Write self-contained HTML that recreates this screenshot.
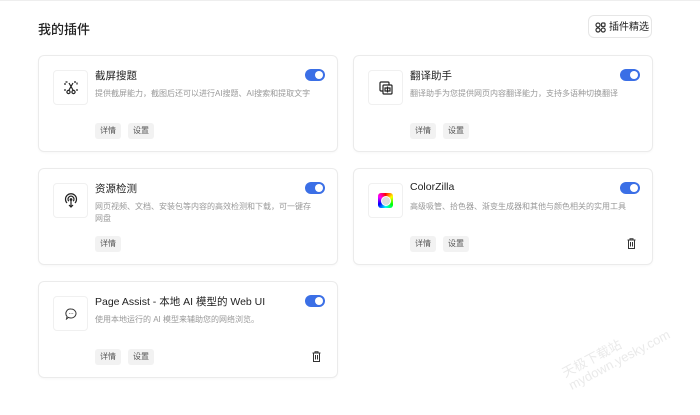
<!DOCTYPE html>
<html><head><meta charset="utf-8"><style>
body{margin:0;width:700px;height:415px;background:#fff;font-family:"Liberation Sans","Noto Sans CJK SC",sans-serif;position:relative;overflow:hidden;color:#222}
.top{position:absolute;left:0;top:0;width:700px;height:1px;background:#eee}
h1{position:absolute;left:38px;top:19px;margin:0;font-size:13px;font-weight:500}
.sel{position:absolute;left:588px;top:15px;width:64px;height:23px;border:1px solid #e6e6e6;border-radius:6px;font-size:10px;line-height:23px;box-sizing:border-box;padding-left:20px}
.card{position:absolute;width:300px;height:97px;border:1px solid #ebebeb;border-radius:6px;box-sizing:border-box;box-shadow:0 1px 2px rgba(0,0,0,0.03)}
.ic{position:absolute;left:14px;top:14px;width:35px;height:35px;border:1px solid #f0f0f0;border-radius:4px;box-sizing:border-box;display:flex;align-items:center;justify-content:center}
.t{position:absolute;left:56px;top:12px;font-size:10.5px}
.d{position:absolute;left:56px;top:32px;width:222px;font-size:8px;color:#999;line-height:12px}
.tg{position:absolute;left:266px;top:13px;width:20px;height:12px;border-radius:6px;background:#3b6fe6}
.tg:after{content:"";position:absolute;right:2px;top:2px;width:8px;height:8px;border-radius:50%;background:#fff}
.b{position:absolute;top:67px;height:16px;line-height:16px;padding:0 5px;background:#f2f2f2;border-radius:3px;font-size:8px;color:#555}
.tr{position:absolute;left:273px;top:69px}
</style></head><body>
<div class="top"></div>
<h1>我的插件</h1>
<div class="sel"><svg style="position:absolute;left:6px;top:6px" width="11" height="11" viewBox="0 0 11 11" fill="none" stroke="#333" stroke-width="1.2"><circle cx="3" cy="3" r="2"/><rect x="6.5" y="1" width="3.5" height="3.5" rx="1"/><circle cx="3" cy="8" r="2"/><circle cx="8.2" cy="8" r="2"/></svg>插件精选</div>

<div class="card" style="left:38px;top:55px">
<div class="ic"><svg width="14" height="14" viewBox="0 0 14 14" fill="none" stroke="#222" stroke-width="1.2"><path d="M1 4V1h3M10 1h3v3M1 8v2M13 8v2" stroke-dasharray="2 1.5"/><path d="M5 2l4 7M9 2L5 9"/><circle cx="4.5" cy="11" r="1.6"/><circle cx="9.5" cy="11" r="1.6"/></svg></div>
<div class="t">截屏搜题</div><div class="tg"></div>
<div class="d">提供截屏能力，截图后还可以进行AI搜题、AI搜索和提取文字</div>
<div class="b" style="left:56px">详情</div><div class="b" style="left:89px">设置</div></div>

<div class="card" style="left:353px;top:55px">
<div class="ic"><svg width="14" height="14" viewBox="0 0 14 14" fill="none" stroke="#222" stroke-width="1.2"><rect x="1" y="1" width="9" height="9" rx="1"/><rect x="4" y="4" width="9" height="9" rx="1" fill="#fff"/><path d="M6 7h5v3H6zM8.5 5.5v6"/></svg></div>
<div class="t">翻译助手</div><div class="tg"></div>
<div class="d" style="width:230px">翻译助手为您提供网页内容翻译能力，支持多语种切换翻译</div>
<div class="b" style="left:56px">详情</div><div class="b" style="left:89px">设置</div></div>

<div class="card" style="left:38px;top:168px">
<div class="ic"><svg width="14" height="15" viewBox="0 0 14 15" fill="none" stroke="#222" stroke-width="1.2"><path d="M3 10a5.5 5.5 0 1 1 8 0"/><path d="M4.8 8.2a3 3 0 1 1 4.4 0"/><circle cx="7" cy="6.5" r="0.8" fill="#222"/><path d="M7 7v7M5 12l2 2 2-2"/></svg></div>
<div class="t">资源检测</div><div class="tg"></div>
<div class="d">网页视频、文档、安装包等内容的高效检测和下载，可一键存网盘</div>
<div class="b" style="left:56px">详情</div></div>

<div class="card" style="left:353px;top:168px">
<div class="ic"><div style="width:15px;height:15px;border-radius:3px;background:conic-gradient(red,yellow,lime,cyan,blue,magenta,red);display:flex;align-items:center;justify-content:center"><div style="width:8px;height:8px;border-radius:50%;background:#ddd;border:1.5px solid #fff"></div></div></div>
<div class="t">ColorZilla</div><div class="tg"></div>
<div class="d" style="width:230px">高级吸管、拾色器、渐变生成器和其他与颜色相关的实用工具</div>
<div class="b" style="left:56px">详情</div><div class="b" style="left:89px">设置</div>
<svg class="tr" width="9" height="11" viewBox="0 0 9 11" fill="none" stroke="#333" stroke-width="1"><path d="M0.5 2h8M3 2V0.8h3V2M1.5 2v8.5h6V2M3.5 4v4.5M5.5 4v4.5"/></svg></div>

<div class="card" style="left:38px;top:281px">
<div class="ic"><svg width="12" height="12" viewBox="0 0 12 12" fill="none" stroke="#333" stroke-width="1"><path d="M6 1a5 4.5 0 1 1-2.5 8.4L1.5 11l0.6-2.5A4.5 4.5 0 0 1 6 1z"/><path d="M4 5.5h0.5M5.8 5.5h0.5M7.6 5.5h0.5"/></svg></div>
<div class="t">Page Assist - 本地 AI 模型的 Web UI</div><div class="tg"></div>
<div class="d">使用本地运行的 AI 模型来辅助您的网络浏览。</div>
<div class="b" style="left:56px">详情</div><div class="b" style="left:89px">设置</div>
<svg class="tr" width="9" height="11" viewBox="0 0 9 11" fill="none" stroke="#333" stroke-width="1"><path d="M0.5 2h8M3 2V0.8h3V2M1.5 2v8.5h6V2M3.5 4v4.5M5.5 4v4.5"/></svg></div>

<div style="position:absolute;left:560px;top:340px;transform:rotate(-28deg);color:#eaeaea;font-size:13px;line-height:14px">天极下载站<br>mydown.yesky.com</div>
</body></html>
